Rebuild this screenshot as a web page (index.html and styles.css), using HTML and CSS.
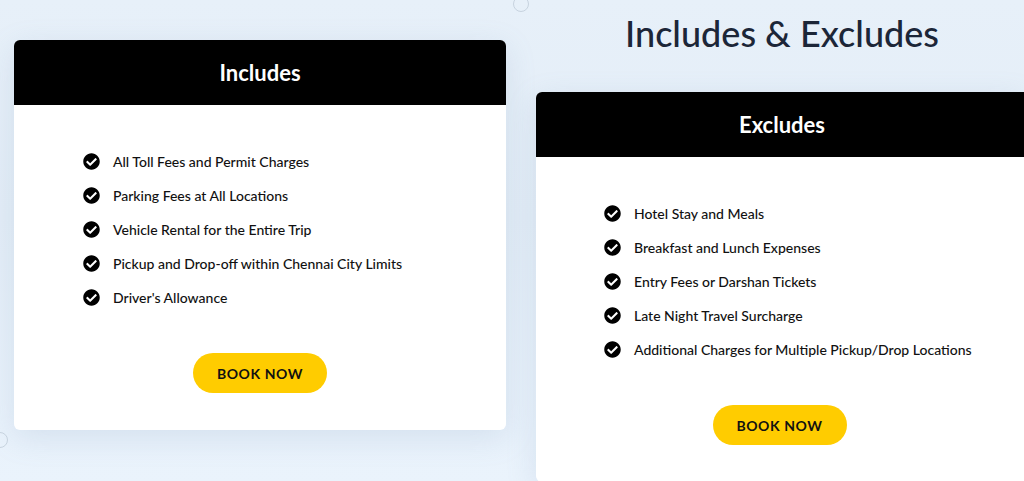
FILE: index.html
```html
<!DOCTYPE html>
<html lang="en">
<head>
    <meta charset="UTF-8">
    <meta name="viewport" content="width=device-width, initial-scale=1.0">
    <title>Includes &amp; Excludes</title>
    <link rel="stylesheet" href="styles.css">
</head>
<body>
    <span class="ring ring-top"></span>
    <span class="ring ring-left"></span>
    <div class="wrap">
        <div class="col col-left">
            <div class="card">
                <div class="card-head"><h3>Includes</h3></div>
                <div class="card-body">
                    <ul class="list">
                        <li><svg class="tick" viewBox="0 0 512 512"><path d="M504 256c0 137-111 248-248 248S8 393 8 256 119 8 256 8s248 111 248 248zM227.3 387.3l184-184c6.2-6.2 6.2-16.4 0-22.6l-22.6-22.6c-6.2-6.2-16.4-6.2-22.6 0L216 308.1l-70.1-70.1c-6.2-6.2-16.4-6.2-22.6 0l-22.6 22.6c-6.2 6.2-6.2 16.4 0 22.6l104 104c6.2 6.2 16.4 6.2 22.6 0z"/></svg>All Toll Fees and Permit Charges</li>
                        <li><svg class="tick" viewBox="0 0 512 512"><path d="M504 256c0 137-111 248-248 248S8 393 8 256 119 8 256 8s248 111 248 248zM227.3 387.3l184-184c6.2-6.2 6.2-16.4 0-22.6l-22.6-22.6c-6.2-6.2-16.4-6.2-22.6 0L216 308.1l-70.1-70.1c-6.2-6.2-16.4-6.2-22.6 0l-22.6 22.6c-6.2 6.2-6.2 16.4 0 22.6l104 104c6.2 6.2 16.4 6.2 22.6 0z"/></svg>Parking Fees at All Locations</li>
                        <li><svg class="tick" viewBox="0 0 512 512"><path d="M504 256c0 137-111 248-248 248S8 393 8 256 119 8 256 8s248 111 248 248zM227.3 387.3l184-184c6.2-6.2 6.2-16.4 0-22.6l-22.6-22.6c-6.2-6.2-16.4-6.2-22.6 0L216 308.1l-70.1-70.1c-6.2-6.2-16.4-6.2-22.6 0l-22.6 22.6c-6.2 6.2-6.2 16.4 0 22.6l104 104c6.2 6.2 16.4 6.2 22.6 0z"/></svg>Vehicle Rental for the Entire Trip</li>
                        <li><svg class="tick" viewBox="0 0 512 512"><path d="M504 256c0 137-111 248-248 248S8 393 8 256 119 8 256 8s248 111 248 248zM227.3 387.3l184-184c6.2-6.2 6.2-16.4 0-22.6l-22.6-22.6c-6.2-6.2-16.4-6.2-22.6 0L216 308.1l-70.1-70.1c-6.2-6.2-16.4-6.2-22.6 0l-22.6 22.6c-6.2 6.2-6.2 16.4 0 22.6l104 104c6.2 6.2 16.4 6.2 22.6 0z"/></svg>Pickup and Drop-off within Chennai City Limits</li>
                        <li><svg class="tick" viewBox="0 0 512 512"><path d="M504 256c0 137-111 248-248 248S8 393 8 256 119 8 256 8s248 111 248 248zM227.3 387.3l184-184c6.2-6.2 6.2-16.4 0-22.6l-22.6-22.6c-6.2-6.2-16.4-6.2-22.6 0L216 308.1l-70.1-70.1c-6.2-6.2-16.4-6.2-22.6 0l-22.6 22.6c-6.2 6.2-6.2 16.4 0 22.6l104 104c6.2 6.2 16.4 6.2 22.6 0z"/></svg>Driver's Allowance</li>
                    </ul>
                    <a class="btn" href="#">BOOK NOW</a>
                </div>
            </div>
        </div>
        <div class="col col-right">
            <h2 class="title">Includes &amp; Excludes</h2>
            <div class="card">
                <div class="card-head"><h3>Excludes</h3></div>
                <div class="card-body">
                    <ul class="list">
                        <li><svg class="tick" viewBox="0 0 512 512"><path d="M504 256c0 137-111 248-248 248S8 393 8 256 119 8 256 8s248 111 248 248zM227.3 387.3l184-184c6.2-6.2 6.2-16.4 0-22.6l-22.6-22.6c-6.2-6.2-16.4-6.2-22.6 0L216 308.1l-70.1-70.1c-6.2-6.2-16.4-6.2-22.6 0l-22.6 22.6c-6.2 6.2-6.2 16.4 0 22.6l104 104c6.2 6.2 16.4 6.2 22.6 0z"/></svg>Hotel Stay and Meals</li>
                        <li><svg class="tick" viewBox="0 0 512 512"><path d="M504 256c0 137-111 248-248 248S8 393 8 256 119 8 256 8s248 111 248 248zM227.3 387.3l184-184c6.2-6.2 6.2-16.4 0-22.6l-22.6-22.6c-6.2-6.2-16.4-6.2-22.6 0L216 308.1l-70.1-70.1c-6.2-6.2-16.4-6.2-22.6 0l-22.6 22.6c-6.2 6.2-6.2 16.4 0 22.6l104 104c6.2 6.2 16.4 6.2 22.6 0z"/></svg>Breakfast and Lunch Expenses</li>
                        <li><svg class="tick" viewBox="0 0 512 512"><path d="M504 256c0 137-111 248-248 248S8 393 8 256 119 8 256 8s248 111 248 248zM227.3 387.3l184-184c6.2-6.2 6.2-16.4 0-22.6l-22.6-22.6c-6.2-6.2-16.4-6.2-22.6 0L216 308.1l-70.1-70.1c-6.2-6.2-16.4-6.2-22.6 0l-22.6 22.6c-6.2 6.2-6.2 16.4 0 22.6l104 104c6.2 6.2 16.4 6.2 22.6 0z"/></svg>Entry Fees or Darshan Tickets</li>
                        <li><svg class="tick" viewBox="0 0 512 512"><path d="M504 256c0 137-111 248-248 248S8 393 8 256 119 8 256 8s248 111 248 248zM227.3 387.3l184-184c6.2-6.2 6.2-16.4 0-22.6l-22.6-22.6c-6.2-6.2-16.4-6.2-22.6 0L216 308.1l-70.1-70.1c-6.2-6.2-16.4-6.2-22.6 0l-22.6 22.6c-6.2 6.2-6.2 16.4 0 22.6l104 104c6.2 6.2 16.4 6.2 22.6 0z"/></svg>Late Night Travel Surcharge</li>
                        <li><svg class="tick" viewBox="0 0 512 512"><path d="M504 256c0 137-111 248-248 248S8 393 8 256 119 8 256 8s248 111 248 248zM227.3 387.3l184-184c6.2-6.2 6.2-16.4 0-22.6l-22.6-22.6c-6.2-6.2-16.4-6.2-22.6 0L216 308.1l-70.1-70.1c-6.2-6.2-16.4-6.2-22.6 0l-22.6 22.6c-6.2 6.2-6.2 16.4 0 22.6l104 104c6.2 6.2 16.4 6.2 22.6 0z"/></svg>Additional Charges for Multiple Pickup/Drop Locations</li>
                    </ul>
                    <a class="btn" href="#">BOOK NOW</a>
                </div>
            </div>
        </div>
    </div>
</body>
</html>
```

FILE: styles.css
```css
html, body {
    height: 100%;
}
body {
    margin: 0;
    font-family: Lato, "Open Sans", sans-serif;
    color: #111;
    background: linear-gradient(180deg, #e7f0f9 0%, #e3edf7 45%, #eaf3fc 100%);
    overflow: hidden;
}
.ring {
    position: absolute;
    width: 14px;
    height: 14px;
    border: 1px solid #c7d3df;
    border-radius: 50%;
}
.ring-top {
    left: 513px;
    top: -4px;
}
.ring-left {
    left: -8px;
    top: 432px;
}
.wrap {
    display: flex;
    gap: 30px;
    padding-left: 14px;
}
.col {
    width: 492px;
    flex-shrink: 0;
}
.col-left {
    padding-top: 40px;
}
.col-right {
    width: 488px;
}
.title {
    margin: 10px 0 0;
    height: 82px;
    text-align: center;
    font-size: 36px;
    font-weight: 500;
    color: #1c2638;
    line-height: 46px;
    padding-left: 4px;
}
.card {
    background: #fff;
    border-radius: 6px;
    overflow: hidden;
    box-shadow: 0 8px 30px rgba(120, 150, 185, 0.18);
}
.col-right .card {
    border-radius: 6px 0 0 6px;
}
.card-head {
    background: #000;
    height: 65px;
    display: flex;
    align-items: center;
    justify-content: center;
}
.col-right .card-head {
    padding-left: 4px;
}
.card-head h3 {
    margin: 0;
    color: #fff;
    font-size: 22px;
    font-weight: 700;
}
.card-body {
    padding: 39px 40px 37px 69px;
    display: flex;
    flex-direction: column;
}
.col-right .card-body {
    padding-left: 68px;
}
.list {
    list-style: none;
    margin: 0;
    padding: 0;
}
.list li {
    display: flex;
    align-items: center;
    height: 34px;
    font-size: 14px;
    font-weight: 500;
    white-space: nowrap;
}
.tick {
    width: 17px;
    height: 17px;
    margin-right: 13px;
    flex-shrink: 0;
    fill: #000;
}
.btn {
    align-self: center;
    margin: 39px 0 0 -29px;
    width: 134px;
    height: 40px;
    border-radius: 20px;
    background-color: #ffcc00;
    color: #111;
    text-decoration: none;
    font-size: 14px;
    font-weight: 700;
    letter-spacing: 0.6px;
    display: flex;
    align-items: center;
    justify-content: center;
}
```
